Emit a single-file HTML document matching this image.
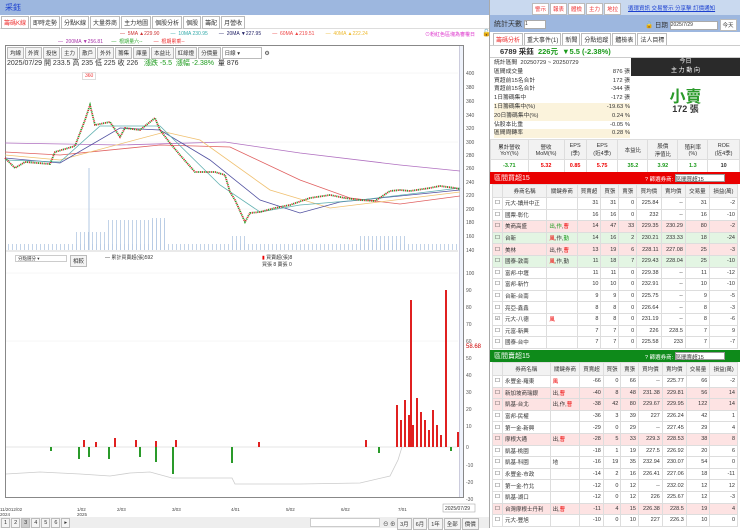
<!DOCTYPE html><html><head><meta charset="utf-8"><style>
*{box-sizing:border-box;margin:0;padding:0}
body{width:740px;height:528px;overflow:hidden;background:#fff;font-family:"Liberation Sans","Noto Sans CJK TC",sans-serif;font-size:6px;color:#333;position:relative}
.a{position:absolute}
.tab{display:inline-block;border:1px solid #bbb;padding:1px 2px;margin-right:1px;background:#fff;font-size:6px}
.btn{display:inline-block;border:1px solid #bbb;padding:1px 2px;background:#f4f4f4;font-size:5.5px;margin-right:1px}
table{border-collapse:collapse;width:100%}
td,th{border:1px solid #ddd;font-size:5.5px;height:11.6px;padding:0 2px;text-align:right;font-weight:normal;white-space:nowrap}
th{background:#f2f2f2;text-align:center;height:13px}
td.n{text-align:left}
td.c{text-align:center;width:9px}
tr.p td{background:#fde3e3}tr.g td{background:#e3f5e3}
.r{color:#e00}.gr{color:#1a9a1a}
</style></head><body>
<div class="a" style="left:0;top:0;width:490px;height:15px;background:#9db7df"></div>
<div class="a" style="left:5px;top:2px;color:#1a3fd0;font-size:8px">采鈺</div>
<div class="a" style="left:0;top:15px;width:490px;height:14px;background:#fff;border-bottom:1px solid #ddd"></div>
<div class="a" style="left:1px;top:16px"><span class="tab" style="color:#e33">籌碼K線</span><span class="tab">即時走勢</span><span class="tab">分點K線</span><span class="tab">大量券商</span><span class="tab">主力地圖</span><span class="tab">個股分析</span><span class="tab">個股</span><span class="tab">籌配</span><span class="tab">月營收</span></div>
<div class="a" style="left:120px;top:31px;font-size:5px;white-space:nowrap"><span style="color:#c33">— &nbsp;5MA ▲229.90</span> &nbsp; &nbsp; &nbsp; &nbsp;<span style="color:#3aa">— &nbsp;10MA 230.95</span> &nbsp; &nbsp; &nbsp; &nbsp;<span style="color:#226">— &nbsp;20MA ▼227.95</span> &nbsp; &nbsp; &nbsp; &nbsp;<span style="color:#e44">— &nbsp;60MA ▲219.51</span> &nbsp; &nbsp; &nbsp; &nbsp;<span style="color:#eb3">— &nbsp;40MA ▲222.24</span></div>
<div class="a" style="left:58px;top:38px;font-size:5px;white-space:nowrap"><span style="color:#a3a">— &nbsp;200MA ▼256.81</span> &nbsp; &nbsp; &nbsp;<span style="color:#3a3">— &nbsp;根期量六--</span> &nbsp; &nbsp; &nbsp; &nbsp;<span style="color:#e33">— &nbsp;根期累乘--</span></div>
<div class="a" style="left:425px;top:31px;font-size:5px;color:#d3c">⊙粉紅色區塊為審權日</div>
<div class="a" style="left:482px;top:29px;font-size:7px">🔓</div>
<div class="a" style="left:5px;top:45px;width:459px;height:453px;border:1px solid #888"></div>
<div class="a" style="left:459px;top:46px;width:4px;height:451px;background:#eef2fb;border-left:1px solid #ccd"></div>
<div class="a" style="left:7px;top:47px"><span class="btn">均線</span><span class="btn">外資</span><span class="btn">投信</span><span class="btn">主力</span><span class="btn">散戶</span><span class="btn">外外</span><span class="btn">籌集</span><span class="btn">庫量</span><span class="btn">本益比</span><span class="btn">紅綠燈</span><span class="btn">分價量</span><span class="btn" style="width:40px;background:#fff">日線 ▾</span> ⚙</div>
<div class="a" style="left:7px;top:58px;font-size:7px">2025/07/29 開 233.5 高 235 低 225 收 226 &nbsp; <span class="gr">漲跌 -5.5 &nbsp;漲幅 -2.38%</span> &nbsp;量 876</div>
<div class="a" style="left:82px;top:72px;border:1px solid #ddd;color:#e33;font-size:5px;padding:0 2px">360</div>
<svg class="a" style="left:0;top:0" width="490" height="528">
<g stroke="#eee" stroke-width="0.5"><line x1="6" x2="458" y1="73" y2="73"/><line x1="6" x2="458" y1="142" y2="142"/><line x1="6" x2="458" y1="209" y2="209"/><line x1="6" x2="458" y1="273" y2="273"/><line x1="6" x2="458" y1="341" y2="341"/><line x1="6" x2="458" y1="447" y2="447" stroke="#ccc"/></g>
<g fill="#555" font-size="5" font-family="Liberation Sans"><text x="466" y="75">400</text><text x="466" y="89">380</text><text x="466" y="103">360</text><text x="466" y="117">340</text><text x="466" y="130">320</text><text x="466" y="144">300</text><text x="466" y="157">280</text><text x="466" y="170">260</text><text x="466" y="184">240</text><text x="466" y="197">220</text><text x="466" y="211">200</text><text x="466" y="224">180</text><text x="466" y="238">160</text><text x="466" y="252">140</text>
<text x="466" y="275">100</text><text x="466" y="292">90</text><text x="466" y="309">80</text><text x="466" y="326">70</text><text x="466" y="343">60</text><text x="466" y="360">50</text><text x="466" y="377">40</text><text x="466" y="394">30</text><text x="466" y="411">20</text><text x="466" y="428">10</text><text x="466" y="449">0</text><text x="466" y="467">-10</text><text x="466" y="484">-20</text><text x="466" y="501">-30</text></g>
<text x="466" y="348" font-size="6" fill="#c00">58.68</text>
<defs><pattern id="v" width="4" height="20" patternUnits="userSpaceOnUse"><rect width="0.8" height="20" fill="#b3c8e3"/></pattern></defs>
<rect x="6" y="244" width="452" height="6" fill="url(#v)"/>
<rect x="75" y="232" width="30" height="18" fill="url(#v)"/>
<rect x="105" y="220" width="60" height="30" fill="url(#v)"/>
<rect x="150" y="218" width="15" height="32" fill="url(#v)"/>
<rect x="230" y="236" width="15" height="14" fill="url(#v)"/>
<rect x="360" y="236" width="45" height="14" fill="url(#v)"/>
<line x1="89" y1="168" x2="89" y2="250" stroke="#b3c8e3"/>
<g fill="none" stroke-width="0.8">
<polyline stroke="#b070c0" points="5,143 120,145 225,142 300,153 400,165 460,171"/>
<polyline stroke="#e06060" points="5,152 60,155 160,145 230,147 300,180 350,198 400,204 460,196"/>
<polyline stroke="#f0c070" points="5,155 60,160 165,132 200,140 270,190 330,208 460,192"/>
<polyline stroke="#5050a0" points="5,158 60,163 120,128 160,130 210,160 260,200 300,213 340,202 460,190"/>
<polyline stroke="#60b0b0" points="5,160 60,162 100,126 160,126 220,185 260,212 300,205 360,200 460,188"/>
</g>
<polyline fill="none" stroke="#d03030" stroke-width="1.8" stroke-dasharray="1.2 2.5" points="5,158 15,168 25,162 50,164 55,152 75,146 85,120 90,105 95,125 110,122 120,137 125,128 140,130 155,118 160,130 170,143 180,155 195,172 215,172 225,175 230,192 235,200 245,222 250,213 260,212 275,208 290,205 310,198 330,195 345,198 360,200 375,201 390,191 400,190 410,191 430,188 440,186 455,188 460,189"/>
<polyline fill="none" stroke="#2a9a2a" stroke-width="1.8" stroke-dasharray="1.2 2.5" stroke-dashoffset="1.9" points="5,158 15,168 25,162 50,164 55,152 75,146 85,120 90,105 95,125 110,122 120,137 125,128 140,130 155,118 160,130 170,143 180,155 195,172 215,172 225,175 230,192 235,200 245,222 250,213 260,212 275,208 290,205 310,198 330,195 345,198 360,200 375,201 390,191 400,190 410,191 430,188 440,186 455,188 460,189"/>
<line x1="6" x2="458" y1="251" y2="251" stroke="#aaa" stroke-width="0.5"/>
<polyline fill="none" stroke="#ccc" stroke-width="0.8" points="6,474 40,472 80,474 110,476 130,473 150,472 172,478 200,478 232,478 235,484 300,484 360,483 390,476 398,460 402,447"/>
<g fill="#e02020">
<rect x="396" y="405" width="2" height="42"/><rect x="400" y="420" width="2" height="27"/><rect x="404" y="400" width="2" height="47"/><rect x="408" y="415" width="2" height="32"/><rect x="412" y="425" width="2" height="22"/><rect x="416" y="398" width="2" height="49"/><rect x="420" y="412" width="2" height="35"/><rect x="424" y="420" width="2" height="27"/><rect x="428" y="430" width="2" height="17"/><rect x="432" y="410" width="2" height="37"/><rect x="436" y="425" width="2" height="22"/><rect x="440" y="435" width="2" height="12"/><rect x="445" y="290" width="2" height="157"/><rect x="410" y="300" width="2" height="147"/><rect x="457" y="432" width="2" height="15"/>
<rect x="83" y="440" width="2" height="7"/><rect x="95" y="442" width="2" height="5"/><rect x="114" y="438" width="2" height="9"/><rect x="135" y="440" width="2" height="7"/><rect x="155" y="441" width="2" height="6"/><rect x="175" y="440" width="2" height="7"/><rect x="258" y="442" width="2" height="5"/><rect x="365" y="440" width="2" height="7"/>
</g>
<g fill="#2a9a2a">
<rect x="78" y="447" width="2" height="12"/><rect x="88" y="447" width="2" height="10"/><rect x="108" y="447" width="2" height="12"/><rect x="139" y="447" width="2" height="10"/><rect x="155" y="447" width="2" height="15"/><rect x="172" y="447" width="2" height="27"/><rect x="231" y="447" width="2" height="16"/><rect x="378" y="447" width="2" height="6"/><rect x="450" y="447" width="2" height="4"/><rect x="50" y="447" width="2" height="4"/>
</g>
<g fill="#444" font-size="4.5" font-family="Liberation Sans"><text x="0" y="511">11/2012/02</text><text x="0" y="516">2024</text><text x="77" y="511">1/02</text><text x="77" y="516">2025</text><text x="117" y="511">2/03</text><text x="172" y="511">3/03</text><text x="231" y="511">4/01</text><text x="286" y="511">5/02</text><text x="341" y="511">6/02</text><text x="398" y="511">7/01</text></g>
<rect x="443" y="504" width="32" height="8" fill="#fff" stroke="#999" stroke-width="0.5"/><text x="445" y="510" font-size="5" fill="#333">2025/07/29</text>
</svg>
<div class="a" style="left:15px;top:255px;width:52px;height:7px;border:1px solid #ccc;font-size:4.5px;padding-left:2px">分點選分 ▾</div>
<div class="a" style="left:70px;top:255px;font-size:5px" ><span class="btn">相較</span></div>
<div class="a" style="left:105px;top:254px;font-size:5px">— 累計買賣超(張)592</div>
<div class="a" style="left:262px;top:254px;font-size:5px"><span class="r">▮</span> 買賣超(張)8<br>買張 8 賣張 0</div>
<div class="a" style="left:0;top:517px;width:490px;height:11px;background:#eee"></div>
<div class="a" style="left:1px;top:518px;font-size:5.5px"><span class="btn">1</span><span class="btn">2</span><span class="btn" style="background:#ccc">3</span><span class="btn">4</span><span class="btn">5</span><span class="btn">6</span><span class="btn">▸</span></div>
<div class="a" style="left:310px;top:518px;width:70px;height:9px;border:1px solid #ccc;background:#fff"></div>
<div class="a" style="left:383px;top:518px;font-size:5.5px">⊖ ⊕ <span class="btn">3月</span><span class="btn">6月</span><span class="btn">1年</span><span class="btn">全部</span><span class="btn">價價</span></div>
<div class="a" style="left:489px;top:0;width:1px;height:528px;background:#aaa"></div>
<div class="a" style="left:490px;top:0;width:250px;height:15px;background:#c9d9ef"></div>
<div class="a" style="left:532px;top:3px;font-size:5.5px"><span class="btn" style="color:#e33;background:#fff">警示</span><span class="btn" style="color:#e33;background:#fff">報表</span><span class="btn" style="color:#e33;background:#fff">體檢</span><span class="btn" style="color:#e33;background:#fff">主力</span><span class="btn" style="color:#e33;background:#fff">地拉</span></div>
<div class="a" style="left:628px;top:4px;font-size:5.5px;color:#1a3fd0;text-decoration:underline;white-space:nowrap">循環資訊 交易警示 分享擊 訂價通知</div>
<div class="a" style="left:490px;top:15px;width:250px;height:17px;background:#9db7df"></div>
<div class="a" style="left:494px;top:19px;font-size:7px">統計天數 <span style="display:inline-block;width:22px;height:9px;background:#fff;border:1px solid #aaa;font-size:5px;vertical-align:middle">1</span></div>
<div class="a" style="left:645px;top:19px;font-size:6.5px;white-space:nowrap">🔓 日期 <span style="display:inline-block;width:48px;height:9px;background:#fff;border:1px solid #aaa;font-size:5px;vertical-align:middle">2025/7/29</span> <span class="btn" style="background:#fff">今天</span></div>
<div class="a" style="left:493px;top:33px"><span class="tab" style="color:#e33">籌碼分析</span><span class="tab">重大事件(1)</span><span class="tab">新聞</span><span class="tab">分點追蹤</span><span class="tab">體檢表</span><span class="tab">法人目標</span></div>
<div class="a" style="left:490px;top:45px;width:250px;height:13px;border-bottom:1px solid #ccc;border-top:1px solid #ccc"></div>
<div class="a" style="left:500px;top:46px;font-size:7.5px;font-weight:bold">6789 采鈺 &nbsp;<span class="gr">226元 &nbsp;▼5.5 (-2.38%)</span></div>
<div class="a" style="left:494px;top:59px;width:136px;font-size:5.8px;line-height:8.8px">
<div>統計區間 &nbsp;20250729 ~ 20250729</div>
<div>區間成交量<span style="float:right">876 張</span></div>
<div>買超前15名合計<span style="float:right">172 張</span></div>
<div>賣超前15名合計<span style="float:right">-344 張</span></div>
<div>1日籌碼集中<span style="float:right">-172 張</span></div>
<div style="background:#fbf3dc">1日籌碼集中(%)<span style="float:right">-19.63 %</span></div>
<div style="background:#fbf3dc">20日籌碼集中(%)<span style="float:right">0.24 %</span></div>
<div>佔股本比重<span style="float:right">-0.05 %</span></div>
<div style="background:#fbf3dc">區間周轉率<span style="float:right">0.28 %</span></div></div>
<div class="a" style="left:631px;top:58px;width:109px;height:18px;background:#2a2a2a;color:#fff;text-align:center;font-size:6px;line-height:9px">今日<br>主 力 動 向</div>
<div class="a" style="left:631px;top:83px;width:109px;text-align:center;color:#2a9a2a;font-size:16px;font-weight:bold">小賣</div>
<div class="a" style="left:631px;top:102px;width:109px;text-align:center;font-size:9px;font-weight:bold">172 張</div>
<div class="a" style="left:490px;top:139px;width:250px">
<table><tr><th style="height:20px">累計營收<br>YoY(%)</th><th>營收<br>MoM(%)</th><th>EPS<br>(季)</th><th>EPS<br>(近4季)</th><th>本益比</th><th>股價<br>淨值比</th><th>殖利率<br>(%)</th><th>ROE<br>(近4季)</th></tr>
<tr><td style="text-align:center;height:13px" class="gr"><b>-3.71</b></td><td style="text-align:center" class="r"><b>5.32</b></td><td style="text-align:center" class="r"><b>0.85</b></td><td style="text-align:center" class="r"><b>5.75</b></td><td style="text-align:center" class="gr"><b>35.2</b></td><td style="text-align:center" class="gr"><b>3.92</b></td><td style="text-align:center" class="gr"><b>1.3</b></td><td style="text-align:center"><b>10</b></td></tr></table></div>
<div class="a" style="left:490px;top:172px;width:250px;height:12px;background:#e90000;color:#fff;font-size:7px;padding:1px 4px">區間買超15<span style="position:absolute;left:155px;top:2px;font-size:5.5px">? 篩選券商: <span style="display:inline-block;width:50px;height:8px;background:#fff;color:#333;border:1px solid #999">區間買超15</span></span></div>
<div class="a" style="left:492px;top:184px;width:246px">
<table><tr><th style="width:9px"></th><th>券商名稱</th><th>關鍵券商</th><th>買賣超</th><th>買張</th><th>賣張</th><th>買均價</th><th>賣均價</th><th>交易量</th><th>損益(萬)</th></tr>
<tr><td class="c">☐</td><td class="n">元大-讀卅中正</td><td></td><td>31</td><td>31</td><td>0</td><td>225.84</td><td>--</td><td>31</td><td>-2</td></tr>
<tr><td class="c">☐</td><td class="n">國票-彰化</td><td></td><td>16</td><td>16</td><td>0</td><td>232</td><td>--</td><td>16</td><td>-10</td></tr>
<tr class="p"><td class="c">☐</td><td class="n">美商高盛</td><td class="n"><span class="gr">出</span>,<span class="gr">作</span>,<span class="r">曹</span></td><td>14</td><td>47</td><td>33</td><td>229.35</td><td>230.29</td><td>80</td><td>-2</td></tr>
<tr class="g"><td class="c">☐</td><td class="n">台新</td><td class="n"><span class="r">風</span>,作,<span class="gr">勤</span></td><td>14</td><td>16</td><td>2</td><td>230.21</td><td>233.33</td><td>18</td><td>-24</td></tr>
<tr class="p"><td class="c">☐</td><td class="n">美林</td><td class="n">出,作,<span class="r">曹</span></td><td>13</td><td>19</td><td>6</td><td>228.11</td><td>227.08</td><td>25</td><td>-3</td></tr>
<tr class="g"><td class="c">☐</td><td class="n">國泰-敦南</td><td class="n"><span class="r">風</span>,作,勤</td><td>11</td><td>18</td><td>7</td><td>229.43</td><td>228.04</td><td>25</td><td>-10</td></tr>
<tr><td class="c">☐</td><td class="n">富邦-中壢</td><td></td><td>11</td><td>11</td><td>0</td><td>229.38</td><td>--</td><td>11</td><td>-12</td></tr>
<tr><td class="c">☐</td><td class="n">富邦-新竹</td><td></td><td>10</td><td>10</td><td>0</td><td>232.91</td><td>--</td><td>10</td><td>-10</td></tr>
<tr><td class="c">☐</td><td class="n">台新-台南</td><td></td><td>9</td><td>9</td><td>0</td><td>225.75</td><td>--</td><td>9</td><td>-5</td></tr>
<tr><td class="c">☐</td><td class="n">亮亞-鑫鑫</td><td></td><td>8</td><td>8</td><td>0</td><td>226.64</td><td>--</td><td>8</td><td>-3</td></tr>
<tr><td class="c">☑</td><td class="n">元大-八德</td><td class="n r">風</td><td>8</td><td>8</td><td>0</td><td>231.19</td><td>--</td><td>8</td><td>-6</td></tr>
<tr><td class="c">☐</td><td class="n">元富-新興</td><td></td><td>7</td><td>7</td><td>0</td><td>226</td><td>228.5</td><td>7</td><td>9</td></tr>
<tr><td class="c">☐</td><td class="n">國泰-台中</td><td></td><td>7</td><td>7</td><td>0</td><td>225.58</td><td>233</td><td>7</td><td>-7</td></tr>
</table></div>
<div class="a" style="left:490px;top:350px;width:250px;height:12px;background:#0e8a1a;color:#fff;font-size:7px;padding:1px 4px">區間賣超15<span style="position:absolute;left:155px;top:2px;font-size:5.5px">? 篩選券商: <span style="display:inline-block;width:50px;height:8px;background:#fff;color:#333;border:1px solid #999">區間賣超15</span></span></div>
<div class="a" style="left:492px;top:362px;width:246px">
<table><tr><th style="width:9px"></th><th>券商名稱</th><th>關鍵券商</th><th>買賣超</th><th>買張</th><th>賣張</th><th>買均價</th><th>賣均價</th><th>交易量</th><th>損益(萬)</th></tr>
<tr><td class="c">☐</td><td class="n">永豐金-羅東</td><td class="n r">風</td><td>-66</td><td>0</td><td>66</td><td>--</td><td>225.77</td><td>66</td><td>-2</td></tr>
<tr class="p"><td class="c">☐</td><td class="n">新加坡商瑞銀</td><td class="n">出,<span class="r">曹</span></td><td>-40</td><td>8</td><td>48</td><td>231.38</td><td>229.81</td><td>56</td><td>14</td></tr>
<tr class="p"><td class="c">☐</td><td class="n">凱基-台北</td><td class="n">出,作,<span class="r">曹</span></td><td>-38</td><td>42</td><td>80</td><td>229.67</td><td>229.95</td><td>122</td><td>14</td></tr>
<tr><td class="c">☐</td><td class="n">富邦-民權</td><td></td><td>-36</td><td>3</td><td>39</td><td>227</td><td>226.24</td><td>42</td><td>1</td></tr>
<tr><td class="c">☐</td><td class="n">第一金-新興</td><td></td><td>-29</td><td>0</td><td>29</td><td>--</td><td>227.45</td><td>29</td><td>4</td></tr>
<tr class="p"><td class="c">☐</td><td class="n">摩根大通</td><td class="n">出,<span class="r">曹</span></td><td>-28</td><td>5</td><td>33</td><td>229.3</td><td>228.53</td><td>38</td><td>8</td></tr>
<tr><td class="c">☐</td><td class="n">凱基-桃園</td><td></td><td>-18</td><td>1</td><td>19</td><td>227.5</td><td>226.92</td><td>20</td><td>6</td></tr>
<tr><td class="c">☐</td><td class="n">凱基-科園</td><td class="n">地</td><td>-16</td><td>19</td><td>35</td><td>232.94</td><td>230.07</td><td>54</td><td>0</td></tr>
<tr><td class="c">☐</td><td class="n">永豐金-市政</td><td></td><td>-14</td><td>2</td><td>16</td><td>226.41</td><td>227.06</td><td>18</td><td>-11</td></tr>
<tr><td class="c">☐</td><td class="n">第一金-竹北</td><td></td><td>-12</td><td>0</td><td>12</td><td>--</td><td>232.02</td><td>12</td><td>12</td></tr>
<tr><td class="c">☐</td><td class="n">凱基-湖口</td><td></td><td>-12</td><td>0</td><td>12</td><td>226</td><td>225.67</td><td>12</td><td>-3</td></tr>
<tr class="p"><td class="c">☐</td><td class="n">台灣摩根士丹利</td><td class="n">出,<span class="r">曹</span></td><td>-11</td><td>4</td><td>15</td><td>226.38</td><td>228.5</td><td>19</td><td>4</td></tr>
<tr><td class="c">☐</td><td class="n">元大-豐旭</td><td></td><td>-10</td><td>0</td><td>10</td><td>227</td><td>226.3</td><td>10</td><td>0</td></tr>
</table></div>
</body></html>
